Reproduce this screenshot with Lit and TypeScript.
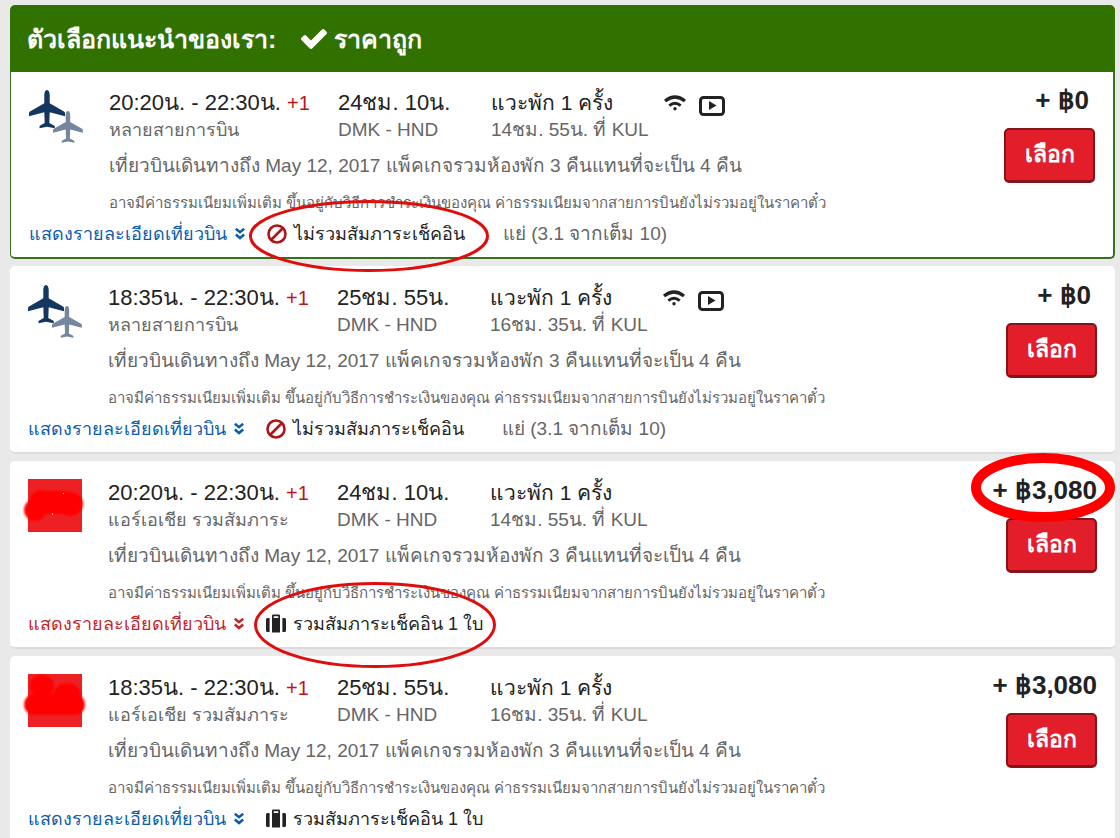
import { LitElement, html, css, svg, nothing } from "lit";
import { customElement, property } from "lit/decorators.js";
import { classMap } from "lit/directives/class-map.js";

interface Flight {
  times: string;
  airline: string;
  duration: string;
  layover: string;
  price: string;
  logo: "planes" | "airline-a" | "airline-b";
  bag: boolean;
  rating?: string;
  featured?: boolean;
  active?: boolean;
  bagRing?: "first" | "second";
  priceRing?: boolean;
}

const flights: Flight[] = [
  { times: "20:20น. - 22:30น.", airline: "หลายสายการบิน", duration: "24ชม. 10น.", layover: "14ชม. 55น. ที่ KUL", price: "+ ฿0", logo: "planes", bag: false, rating: "แย่ (3.1 จากเต็ม 10)", featured: true, bagRing: "first" },
  { times: "18:35น. - 22:30น.", airline: "หลายสายการบิน", duration: "25ชม. 55น.", layover: "16ชม. 35น. ที่ KUL", price: "+ ฿0", logo: "planes", bag: false, rating: "แย่ (3.1 จากเต็ม 10)" },
  { times: "20:20น. - 22:30น.", airline: "แอร์เอเชีย รวมสัมภาระ", duration: "24ชม. 10น.", layover: "14ชม. 55น. ที่ KUL", price: "+ ฿3,080", logo: "airline-a", bag: true, active: true, bagRing: "second", priceRing: true },
  { times: "18:35น. - 22:30น.", airline: "แอร์เอเชีย รวมสัมภาระ", duration: "25ชม. 55น.", layover: "16ชม. 35น. ที่ KUL", price: "+ ฿3,080", logo: "airline-b", bag: true },
];

const plane = svg`<path d="M18 0c1.700 0 2.700 2.500 2.700 5v8.300L35 21.500q1 .6 1 1.600v3.200L20.700 22.200 20.300 33l4.700 2.500q.8.400.8 1.200v1.500L18 36.800l-7.500 1.400v-1.500q0-.8.7-1.200l4.500-2.500-.4-10.800L0 26.300v-3.200q0-1 1-1.600l14.300-8.200V5c0-2.500 1-5 2.700-5z"/>`;

const planesIcon = html`<svg class="logo" viewBox="0 0 58 56" aria-hidden="true">
  <g fill="#14375f" transform="translate(0 1)">${plane}</g>
  <g fill="#74879f" transform="translate(24 22) scale(.83)">${plane}</g>
</svg>`;

const airlineLogo = (variant: string) => html`<svg class="logo" viewBox="0 0 58 56" aria-hidden="true">
  <defs><filter id="soft" x="-20%" y="-20%" width="140%" height="140%"><feGaussianBlur stdDeviation="1" /></filter></defs>
  <rect x="0" y="0" width="54" height="53" fill="#ed2024" />
  ${variant === "airline-a"
    ? svg`<g filter="url(#soft)" fill="#f00"><ellipse cx="7" cy="31" rx="11" ry="11"/><ellipse cx="14" cy="21" rx="12" ry="10"/><rect x="8" y="12" width="38" height="23" rx="9"/><ellipse cx="42" cy="25" rx="13" ry="12"/></g><g fill="#ffa0a0"><rect x="35" y="14" width="1" height="1"/><rect x="24" y="34" width="1" height="2"/></g>`
    : svg`<g filter="url(#soft)" fill="#f00"><ellipse cx="14" cy="12" rx="12" ry="11"/><ellipse cx="39" cy="22" rx="14" ry="13"/><rect x="-4" y="20" width="61" height="21" rx="10"/></g>`}
</svg>`;

const checkIcon = html`<svg class="check" viewBox="121 338 1550 1184" aria-hidden="true"><path fill="currentColor" d="M1671 566q0 40-28 68l-724 724-136 136q-28 28-68 28t-68-28l-136-136-362-362q-28-28-28-68t28-68l136-136q28-28 68-28t68 28l294 295 656-657q28-28 68-28t68 28l136 136q28 28 28 68z"/></svg>`;

const chevrons = html`<svg class="chevrons" viewBox="0 0 10 12" fill="none" stroke="currentColor" stroke-width="2.600" aria-hidden="true"><path d="M.8 .8 5 4.200 9.200 .8M.8 6.600 5 10 9.200 6.600"/></svg>`;

const banIcon = html`<svg class="note-icon" viewBox="0 0 20 20" fill="none" stroke="#ad1519" aria-hidden="true"><circle cx="10" cy="10" r="8.500" stroke-width="2.600"/><path d="M4.500 15.500l11-11" stroke-width="2.600"/></svg>`;

const bagIcon = html`<svg class="note-icon" viewBox="0 0 20 20" fill="#222" aria-hidden="true"><path d="M1.500 4H3.600v14H1.500Q0 18 0 16.500v-11Q0 4 1.500 4zM16.400 4h2.100Q20 4 20 5.500v11q0 1.500-1.500 1.500h-2.100zM6 3.500V1.800Q6 .5 7.300 .5h5.400q1.300 0 1.300 1.300v1.700 15H6zM7.700 2.200v1.800h4.600V2.200z" fill-rule="evenodd"/></svg>`;

const wifiIcon = html`<svg class="wifi" viewBox="0 0 22 16" fill="none" stroke="#222" role="img" aria-label="Wi-Fi"><path d="M1 6Q11-2 21 6" stroke-width="3.200"/><path d="M5.300 10.600Q11 6 16.700 10.600" stroke-width="2.800"/><circle cx="11" cy="13.800" r="1.700" fill="#222" stroke="none"/></svg>`;

const videoIcon = html`<svg class="video" viewBox="0 0 26 20" role="img" aria-label="Video"><rect x="1.500" y="1.500" width="23" height="17" rx="3" fill="none" stroke="#222" stroke-width="3"/><path d="M10 5v9l7.500-4.500z" fill="#222"/></svg>`;

@customElement("flight-card")
export class FlightCard extends LitElement {
  @property({ attribute: false }) flight!: Flight;

  static styles = css`
    :host { display: block; }
    .card {
      box-sizing: border-box;
      background: #fff;
      border-bottom: 2px solid #dcdcdc;
      border-radius: 5px;
      padding: 18px 18px 9px;
      color: #222;
    }
    .card.featured {
      border: 1px solid #387020;
      border-width: 0 2px 2px 1px;
      border-radius: 0 0 5px 5px;
      padding-top: 17px;
    }
    .main { display: flex; align-items: flex-start; }
    .logo { width: 58px; height: 56px; flex: none; margin-right: 22px; overflow: visible; }
    .body { flex: 1; min-width: 0; }
    .legs { display: grid; grid-template-columns: 229px 153px auto 1fr; }
    .big { font-size: 22px; line-height: 28px; white-space: nowrap; }
    .big.stops { font-size: 21px; }
    .sub { font-size: 19px; line-height: 26px; color: #666; white-space: nowrap; }
    .sub.airline { font-size: 18px; }
    .plus { font-size: 20px; color: #c01419; }
    .amenities { display: flex; gap: 13px; padding: 6px 0 0 15px; align-items: flex-start; }
    .wifi { width: 22px; height: 16px; }
    .video { width: 26px; height: 20px; margin-top: 1px; }
    .deal { margin: 9px 0 0; font-size: 19px; line-height: 28px; color: #666; }
    .fees { margin: 11px 0 0; font-size: 15px; line-height: 24px; color: #666; }
    .side { display: flex; flex-direction: column; align-items: flex-end; }
    .price { position: relative; font-size: 26px; line-height: 22px; font-weight: bold; white-space: nowrap; }
    .price.same { padding-right: 6px; }
    .choose {
      margin-top: 17px;
      width: 91px;
      height: 55px;
      border: 2px solid #85141a;
      border-bottom-width: 3px;
      border-radius: 5px;
      background: #e21e2a;
      color: #fff;
      font: bold 23px/28px "Liberation Sans", sans-serif;
      padding: 0 0 2px;
      cursor: pointer;
    }
    .foot { display: flex; align-items: center; margin-top: 5px; font-size: 18px; line-height: 28px; white-space: nowrap; }
    .details { flex: none; width: 238px; }
    .link { color: #0b5cad; text-decoration: none; }
    .link.active { color: #c3242b; }
    .chevrons { width: 10px; height: 12px; margin-left: 8px; }
    .note { position: relative; display: flex; align-items: center; gap: 7px; }
    .note-icon { width: 20px; height: 20px; }
    .rating { margin-left: 38px; font-size: 19px; color: #666; }
    .ring { position: absolute; z-index: 2; overflow: visible; pointer-events: none; }
    .ring.first { left: -18px; top: -20px; width: 240px; height: 72px; }
    .ring.second { left: -12px; top: -28px; width: 242px; height: 86px; }
    .ring.total { right: -18px; top: -26px; width: 144px; height: 69px; }
  `;

  private ring(kind: string, w: number, h: number, stroke: number, color: string) {
    return html`<svg class="ring ${kind}" viewBox="0 0 ${w} ${h}" aria-hidden="true"><ellipse cx=${w / 2} cy=${h / 2} rx=${(w - stroke) / 2} ry=${(h - stroke) / 2} fill="none" stroke=${color} stroke-width=${stroke}></ellipse></svg>`;
  }

  render() {
    const f = this.flight;
    return html`<article class=${classMap({ card: true, featured: !!f.featured })}>
      <div class="main">
        ${f.logo === "planes" ? planesIcon : airlineLogo(f.logo)}
        <div class="body">
          <div class="legs">
            <div>
              <div class="big">${f.times} <span class="plus">+1</span></div>
              <div class="sub airline">${f.airline}</div>
            </div>
            <div>
              <div class="big">${f.duration}</div>
              <div class="sub">DMK - HND</div>
            </div>
            <div>
              <div class="big stops">แวะพัก 1 ครั้ง</div>
              <div class="sub">${f.layover}</div>
            </div>
            ${f.bag ? nothing : html`<div class="amenities">${wifiIcon}${videoIcon}</div>`}
          </div>
          <p class="deal">เที่ยวบินเดินทางถึง May 12, 2017 แพ็คเกจรวมห้องพัก 3 คืนแทนที่จะเป็น 4 คืน</p>
          <p class="fees">อาจมีค่าธรรมเนียมเพิ่มเติม ขึ้นอยู่กับวิธีการชำระเงินของคุณ ค่าธรรมเนียมจากสายการบินยังไม่รวมอยู่ในราคาตั๋ว</p>
        </div>
        <div class="side">
          <div class=${classMap({ price: true, same: !f.bag })}>${f.price}${f.priceRing ? this.ring("total", 144, 69, 10, "#f00") : nothing}</div>
          <button class="choose" type="button">เลือก</button>
        </div>
      </div>
      <div class="foot">
        <div class="details"><a href="#" class=${classMap({ link: true, active: !!f.active })}>แสดงรายละเอียดเที่ยวบิน${chevrons}</a></div>
        <div class="note">
          ${f.bag ? bagIcon : banIcon}<span>${f.bag ? "รวมสัมภาระเช็คอิน 1 ใบ" : "ไม่รวมสัมภาระเช็คอิน"}</span>
          ${f.bagRing === "first" ? this.ring("first", 240, 72, 3, "#e00d0d") : nothing}
          ${f.bagRing === "second" ? this.ring("second", 242, 86, 3, "#e00d0d") : nothing}
        </div>
        ${f.rating ? html`<div class="rating">${f.rating}</div>` : nothing}
      </div>
    </article>`;
  }
}

@customElement("app-root")
export class AppRoot extends LitElement {
  static styles = css`
    :host {
      display: block;
      box-sizing: border-box;
      min-height: 100vh;
      padding: 5px 5px 0 10px;
      background: #e9e9e9;
      font-family: "Liberation Sans", sans-serif;
    }
    .banner {
      display: flex;
      align-items: center;
      gap: 25px;
      height: 67px;
      padding: 0 17px;
      border-radius: 5px 5px 0 0;
      background: #317100;
      color: #fff;
    }
    .title, .reason { margin: 0; font-size: 25px; line-height: 32px; font-weight: bold; white-space: nowrap; }
    .reason { display: flex; align-items: center; gap: 7px; }
    .check { width: 26px; height: 20px; }
    .list { display: flex; flex-direction: column; gap: 7px; }
  `;

  render() {
    return html`<header class="banner">
        <h2 class="title">ตัวเลือกแนะนำของเรา:</h2>
        <p class="reason">${checkIcon}<span>ราคาถูก</span></p>
      </header>
      <main class="list">${flights.map((f) => html`<flight-card .flight=${f}></flight-card>`)}</main>`;
  }
}
